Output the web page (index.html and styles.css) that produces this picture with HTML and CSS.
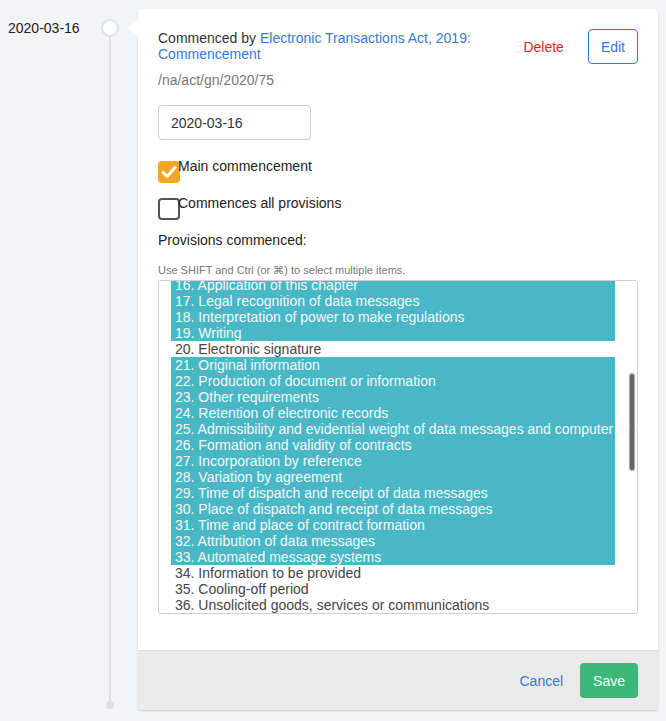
FILE: index.html
```html
<!DOCTYPE html>
<html lang="en">
<head>
<meta charset="utf-8">
<title>Commencement</title>
<link rel="stylesheet" href="styles.css">
</head>
<body>
<div class="entry">
  <div class="date">2020-03-16</div>
  <div class="rail">
    <div class="circle"></div>
    <div class="line"></div>
    <div class="dot"></div>
  </div>
  <div class="card">
    <div class="card-body">
      <div class="header">
        <div class="title">Commenced by <a class="link" href="#">Electronic Transactions Act, 2019: Commencement</a></div>
        <button class="btn-delete">Delete</button>
        <button class="btn-edit">Edit</button>
      </div>
      <div class="path">/na/act/gn/2020/75</div>
      <input class="date-input" type="text" value="2020-03-16">
      <div class="check-row">
        <span class="box checked"><svg width="22" height="22" viewBox="0 0 22 22"><polyline points="5,11.5 9.2,15.5 17,6.5" fill="none" stroke="#fff" stroke-width="3" stroke-linecap="round" stroke-linejoin="round"/></svg></span>
        <span class="check-label">Main commencement</span>
      </div>
      <div class="check-row second">
        <span class="box"></span>
        <span class="check-label">Commences all provisions</span>
      </div>
      <div class="field-label">Provisions commenced:</div>
      <div class="help">Use SHIFT and Ctrl (or ⌘) to select multiple items.</div>
      <div class="listbox">
        <div class="options">
          <div class="opt sel">16. Application of this chapter</div>
          <div class="opt sel">17. Legal recognition of data messages</div>
          <div class="opt sel">18. Interpretation of power to make regulations</div>
          <div class="opt sel">19. Writing</div>
          <div class="opt">20. Electronic signature</div>
          <div class="opt sel">21. Original information</div>
          <div class="opt sel">22. Production of document or information</div>
          <div class="opt sel">23. Other requirements</div>
          <div class="opt sel">24. Retention of electronic records</div>
          <div class="opt sel">25. Admissibility and evidential weight of data messages and computer evidence</div>
          <div class="opt sel">26. Formation and validity of contracts</div>
          <div class="opt sel">27. Incorporation by reference</div>
          <div class="opt sel">28. Variation by agreement</div>
          <div class="opt sel">29. Time of dispatch and receipt of data messages</div>
          <div class="opt sel">30. Place of dispatch and receipt of data messages</div>
          <div class="opt sel">31. Time and place of contract formation</div>
          <div class="opt sel">32. Attribution of data messages</div>
          <div class="opt sel">33. Automated message systems</div>
          <div class="opt">34. Information to be provided</div>
          <div class="opt">35. Cooling-off period</div>
          <div class="opt">36. Unsolicited goods, services or communications</div>
        </div>
        <div class="thumb"></div>
      </div>
    </div>
    <div class="footer">
      <a class="cancel" href="#">Cancel</a>
      <button class="btn-save">Save</button>
    </div>
  </div>
</div>
</body>
</html>
```
FILE: styles.css
```css
* { box-sizing: border-box; }
body {
  margin: 0;
  background: #f3f4f6;
  font-family: "Liberation Sans", Arial, sans-serif;
  font-size: 14px;
  line-height: 16px;
  color: #333;
}
.entry {
  display: flex;
  padding: 9px 8px 11px 8px;
}
.date {
  width: 90px;
  flex-shrink: 0;
  padding-top: 11px;
  color: #222;
  white-space: nowrap;
}
.rail {
  width: 24px;
  flex-shrink: 0;
  display: flex;
  flex-direction: column;
  align-items: center;
  padding-top: 10px;
  padding-bottom: 1px;
}
.circle {
  width: 18px;
  height: 18px;
  border: 2px solid #dcdfe4;
  border-radius: 50%;
  background: #fff;
}
.line {
  flex: 1;
  width: 2px;
  background: #dcdfe4;
}
.dot {
  width: 8px;
  height: 8px;
  border-radius: 50%;
  background: #dcdfe4;
}
.card {
  position: relative;
  flex: 1;
  min-width: 0;
  margin-left: 16px;
  background: #fff;
  border-radius: 4px;
  box-shadow: 0 1px 2px rgba(0,0,0,0.18);
}
.card::before {
  content: "";
  position: absolute;
  left: -10px;
  top: 11px;
  border-top: 8px solid transparent;
  border-bottom: 8px solid transparent;
  border-right: 10px solid #fff;
}
.card-body {
  padding: 20px 20px 36px 20px;
}
.header {
  display: flex;
  align-items: flex-start;
}
.title {
  flex: 1;
  padding-top: 1px;
}
.link {
  color: #3479d3;
  text-decoration: none;
}
.btn-delete {
  background: none;
  border: none;
  font: inherit;
  color: #e51c2a;
  height: 35px;
  padding: 0;
  margin-right: 24px;
  margin-left: 12px;
}
.btn-edit {
  background: #fff;
  border: 1px solid #3479d3;
  border-radius: 4px;
  color: #3479d3;
  font: inherit;
  height: 35px;
  padding: 0 12px;
}
.path {
  margin-top: 8px;
  color: #777;
}
.date-input {
  display: block;
  margin-top: 17px;
  width: 153px;
  height: 35px;
  border: 1px solid #cccccc;
  border-radius: 4px;
  padding: 0 12px;
  font: inherit;
  color: #333;
}
.check-row {
  display: flex;
  align-items: flex-start;
  margin-top: 18px;
}
.check-row.second {
  margin-top: 12px;
}
.box {
  width: 22px;
  height: 22px;
  margin-top: 3px;
  border-radius: 4px;
  border: 2px solid #555;
  background: #fff;
  flex-shrink: 0;
}
.box.checked {
  border: none;
  background: #f6a623;
}
.box svg { display: block; }
.check-label {
  margin-left: -2px;
  color: #222;
}
.field-label {
  margin-top: 12px;
  color: #222;
}
.help {
  margin-top: 16px;
  font-size: 11px;
  line-height: 13px;
  color: #777;
}
.listbox {
  position: relative;
  margin-top: 3px;
  height: 334px;
  border: 1px solid #cfd0d4;
  border-radius: 3px;
  overflow: hidden;
  padding: 0 22px 0 12px;
}
.options {
  margin-top: -4px;
}
.opt {
  line-height: 16px;
  padding-left: 4px;
  white-space: nowrap;
  color: #444;
}
.opt.sel {
  background: #49b8c6;
  color: #f5f7f8;
}
.thumb {
  position: absolute;
  right: 2px;
  top: 92px;
  width: 6px;
  height: 98px;
  border-radius: 3px;
  background: #6a6664;
  border: 1px solid #a9a6a4;
}
.footer {
  display: flex;
  justify-content: flex-end;
  align-items: center;
  background: #eaeaea;
  border-top: 1px solid #dcdcdc;
  border-radius: 0 0 4px 4px;
  padding: 12px 20px;
}
.cancel {
  color: #3479d3;
  text-decoration: none;
  margin-right: 17px;
}
.btn-save {
  background: #3db878;
  color: #fff;
  border: none;
  border-radius: 4px;
  font: inherit;
  height: 35px;
  padding: 0 13px;
}
```
